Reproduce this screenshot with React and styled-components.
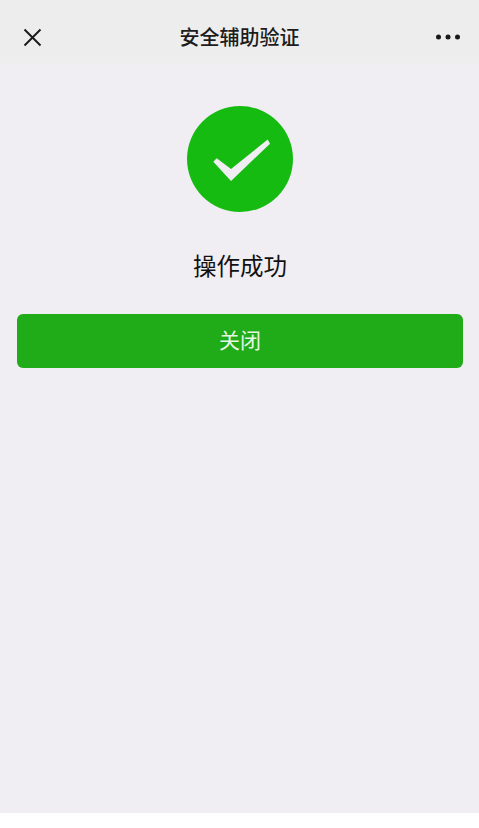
import React from "react";
import styled, { createGlobalStyle } from "styled-components";

const GlobalStyle = createGlobalStyle`
  html, body {
    margin: 0;
    padding: 0;
    background: #ffffff;
    font-family: "Noto Sans CJK SC", "Noto Sans", sans-serif;
  }
`;

const Page = styled.div`
  display: flex;
  flex-direction: column;
  height: 813px;
  background: #f0edf3;
`;

const Header = styled.header`
  display: flex;
  align-items: center;
  justify-content: space-between;
  height: 64px;
  padding: 0 22px;
  background: #ededed;
  border-bottom: 1px solid #efedf1;
  box-sizing: border-box;
`;

const IconButton = styled.button`
  display: flex;
  align-items: center;
  justify-content: center;
  width: 21px;
  height: 21px;
  padding: 0;
  border: 0;
  background: transparent;
  margin-top: 11px;
`;

const MoreButton = styled(IconButton)`
  width: 24px;
  margin-right: -3px;
`;

const Title = styled.h1`
  margin: 10px 0 0;
  font-size: 20px;
  line-height: 28px;
  font-weight: 500;
  color: #1c1c1c;
`;

const Content = styled.main`
  display: flex;
  flex-direction: column;
  align-items: center;
  padding: 42px 16px 0 17px;
`;

const Message = styled.p`
  margin: 35px 0 0;
  font-size: 23.5px;
  line-height: 36px;
  font-weight: 400;
  color: #111111;
`;

const PrimaryButton = styled.button`
  width: 100%;
  height: 54px;
  margin-top: 31px;
  padding: 0 0 4px;
  border: 0;
  border-radius: 6px;
  background: #20ac18;
  color: #e6f7e4;
  font-family: inherit;
  font-size: 21px;
`;

const CloseIcon = () => (
  <svg width="21" height="21" viewBox="0 0 21 21" fill="none">
    <path d="M2.5 2.5 L18.5 18.5 M18.5 2.5 L2.5 18.5" stroke="#1a1a1a" strokeWidth="1.9" />
  </svg>
);

const MoreIcon = () => (
  <svg width="24" height="6" viewBox="0 0 24 6" fill="#1a1a1a">
    <circle cx="2.5" cy="3" r="2.5" />
    <circle cx="12" cy="3" r="2.5" />
    <circle cx="21.5" cy="3" r="2.5" />
  </svg>
);

const SuccessIcon = () => (
  <svg width="106" height="106" viewBox="0 0 106 106">
    <circle cx="53" cy="53" r="53" fill="#16bb11" />
    <polygon
      points="26.3,55.7 29.7,52.3 44,63 80.7,33.5 83,37.8 44,74.9"
      fill="#f0edf3"
    />
  </svg>
);

export default function App() {
  return (
    <>
      <GlobalStyle />
      <Page>
        <Header>
          <IconButton aria-label="关闭">
            <CloseIcon />
          </IconButton>
          <Title>安全辅助验证</Title>
          <MoreButton aria-label="更多">
            <MoreIcon />
          </MoreButton>
        </Header>
        <Content>
          <SuccessIcon />
          <Message>操作成功</Message>
          <PrimaryButton>关闭</PrimaryButton>
        </Content>
      </Page>
    </>
  );
}
